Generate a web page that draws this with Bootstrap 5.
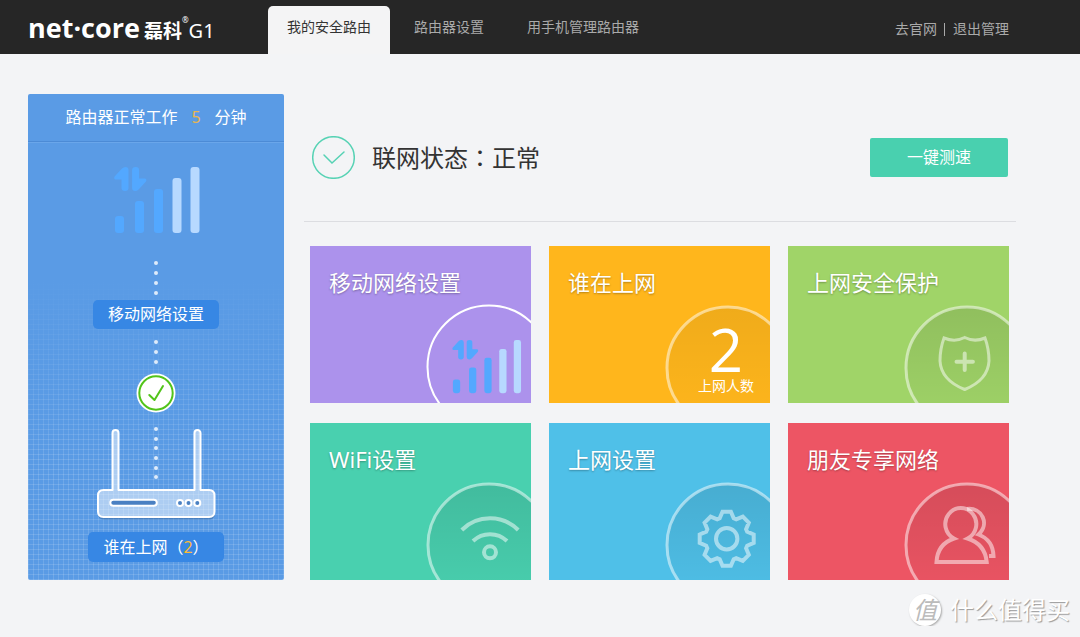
<!DOCTYPE html>
<html lang="zh-CN">
<head>
<meta charset="utf-8">
<meta name="viewport" content="width=device-width, initial-scale=1">
<title>net-core 磊科 G1</title>
<link href="https://cdn.jsdelivr.net/npm/bootstrap@5.3.0/dist/css/bootstrap.min.css" rel="stylesheet">
<style>
  body { background: #f3f4f6; font-family: "Noto Sans", "Noto Sans CJK SC", sans-serif; color: #333; }
  a { text-decoration: none; }

  /* top bar */
  .topbar { background: #262626; min-height: 54px; padding-left: 28px; padding-right: 71px; font-size: 14px; line-height: 20px; }
  .logo { width: 240px; height: 54px; color: #fff; line-height: 40px; padding-top: 8px; }
  .logo-name { font-family: "Open Sans", sans-serif; font-size: 27px; font-weight: 700; }
  .logo-cn { font-size: 19px; font-weight: 700; margin-left: 4px; }
  .logo-reg { font-size: 8px; line-height: 8px; align-self: flex-start; margin-top: 8px; }
  .logo-model { font-size: 20px; }
  .main-tabs { gap: 5px; }
  .main-tabs .nav-link { color: #aaa; padding: 11px 19px 17px; border-radius: 5px 5px 0 0; }
  .main-tabs .nav-link.active { background: #f4f4f5; color: #333; }
  .quick-links a { color: #aaa; }
  .quick-links .rule { width: 1px; height: 13px; background: #aaa; margin: 0 8px 0 7px; }

  /* page body */
  .page { padding: 40px 64px 0 28px; gap: 20px; }
  .side {
    width: 256px; border-radius: 2px; color: #fff; font-size: 16px;
    background:
      linear-gradient(#5a9be5 38%, rgba(90,155,229,0) 75%),
      repeating-linear-gradient(90deg, rgba(255,255,255,.13) 0 1px, transparent 1px 5px),
      repeating-linear-gradient(rgba(255,255,255,.13) 0 1px, transparent 1px 5px),
      #5a9be5;
  }
  .side-head { line-height: 47px; border-bottom: 1px solid #4c8bd6; box-shadow: 0 1px 0 #6aa6ea; }
  .num { color: #e9b650; }
  .side-head .num { margin: 0 14px; }
  .pill { background: #3787e4; color: #fff; border-radius: 5px; line-height: 29px; padding: 0 15px; }
  .pill .num { color: #ffbb33; }

  .status { height: 128px; border-bottom: 1px solid #dcdde1; padding: 0 8px; gap: 17px; }
  .status-text { font-size: 24px; line-height: 36px; }
  /* full-width punctuation centred in its cell */
  .punct { font-family: "Noto Sans CJK TC", sans-serif; }
  .btn-test { background: #49d0af; color: #fff; font-size: 16px; line-height: 24px; width: 138px; padding: 7px 0 8px; border-radius: 2px; border: 0; }
  .btn-test:hover { background: #3fc4a3; color: #fff; }

  .tiles { padding: 24px 7px 0 6px; }
  .tiles .row { --bs-gutter-x: 18px; --bs-gutter-y: 20px; }
  .tile { height: 157px; color: #fff; }
  .tile-title { font-size: 22px; line-height: 32px; padding: 20px 19px 0; text-shadow: 0 1px 2px rgba(0,0,0,.3); }
  .tile svg { margin-top: -5px; }
  .t-purple { background: #ac92ec; }
  .t-amber { background: #ffb61c; }
  .t-lime { background: #a0d468; }
  .t-mint { background: #49d0af; }
  .t-sky { background: #4fc0e8; }
  .t-red { background: #ed5564; }
  .ring { fill: url(#shade); stroke: rgba(255,255,255,.5); stroke-width: 3; }
  .t-amber .ring { fill-opacity: .6; }
  .glyph { fill: none; stroke: rgba(255,255,255,.5); stroke-width: 4; }
  .glyph-thin { stroke-width: 3; }
  .big-num { font-family: "Open Sans", sans-serif; font-size: 60px; fill: #fff; }
  .num-label { font-size: 14px; fill: #fff; }

  /* site signature */
  .sign { padding: 14px 10px 0 0; gap: 9px; color: #fff; text-shadow: 1px 1px 1px #999; font-size: 24px; line-height: 32px; }
  .sign-mark { width: 32px; height: 32px; border-radius: 50%; background: #fff; color: #bbb; box-shadow: 1px 1px 2px #aaa; text-shadow: none; font-size: 24px; font-style: italic; }
</style>
</head>
<body>

<svg width="0" height="0" class="position-absolute" aria-hidden="true">
  <defs>
    <linearGradient id="shade" x1="0" y1="0" x2="0" y2="1">
      <stop offset="0" stop-color="#000" stop-opacity=".1"/>
      <stop offset=".8" stop-color="#000" stop-opacity=".02"/>
    </linearGradient>
    <g id="signal">
      <g fill="#53a8ff">
        <path id="arrow" d="M18.600 16.500 L26 8.500 Q27.500 7 29.500 7 Q32.500 7 32.500 10 V28 Q32.500 31 29 31 Q25.500 31 25.500 28 V19.500 H19.500 Q17.500 19 18.600 16.500Z"/>
        <use href="#arrow" transform="rotate(180 34.300 19)"/>
        <rect x="19" y="56" width="9" height="17" rx="3"/>
        <rect x="39" y="41" width="9" height="32" rx="3"/>
        <rect x="58" y="29" width="9" height="44" rx="3"/>
      </g>
      <g fill="#b7d9ff">
        <rect x="76.500" y="18" width="9" height="55" rx="3"/>
        <rect x="94.500" y="7" width="9" height="66" rx="3"/>
      </g>
    </g>
  </defs>
</svg>

<header class="topbar d-flex flex-wrap align-items-end">
  <a href="#" class="logo d-flex align-items-baseline flex-shrink-0">
    <span class="logo-name">net·core</span><span class="logo-cn">磊科</span><span class="logo-reg">®</span><span class="logo-model">G1</span>
  </a>
  <ul class="nav main-tabs">
    <li class="nav-item"><a class="nav-link active" href="#">我的安全路由</a></li>
    <li class="nav-item"><a class="nav-link" href="#">路由器设置</a></li>
    <li class="nav-item"><a class="nav-link" href="#">用手机管理路由器</a></li>
  </ul>
  <div class="quick-links d-flex align-items-center align-self-center ms-auto pt-1">
    <a href="#">去官网</a><span class="rule"></span><a href="#">退出管理</a>
  </div>
</header>

<div class="page d-flex">
  <aside class="side d-flex flex-column align-items-center flex-shrink-0">
    <div class="side-head w-100 text-center">路由器正常工作<span class="num">5</span>分钟</div>
    <svg class="mt-3" width="120" height="142" viewBox="0 -2 120 142" aria-hidden="true">
      <use href="#signal"/>
      <g fill="#fff" fill-opacity=".8">
        <circle cx="60" cy="103" r="2"/><circle cx="60" cy="113" r="2"/><circle cx="60" cy="123" r="2"/><circle cx="60" cy="133" r="2"/>
      </g>
    </svg>
    <a href="#" class="pill">移动网络设置</a>
    <svg width="120" height="203" viewBox="0 0 120 203" aria-hidden="true">
      <g fill="#fff" fill-opacity=".8">
        <circle cx="60" cy="13" r="2"/><circle cx="60" cy="23" r="2"/><circle cx="60" cy="33" r="2"/>
        <circle cx="60" cy="100" r="2"/><circle cx="60" cy="110" r="2"/><circle cx="60" cy="119" r="2"/><circle cx="60" cy="129" r="2"/><circle cx="60" cy="139" r="2"/><circle cx="60" cy="148" r="2"/>
      </g>
      <circle cx="60" cy="64" r="19.500" fill="#fff"/>
      <circle cx="60" cy="64" r="16.700" fill="none" stroke="#52c41a" stroke-width="2"/>
      <path d="M53.300 66 L58.500 71 L67 57" fill="none" stroke="#52c41a" stroke-width="2" stroke-linecap="round" stroke-linejoin="round"/>
      <path d="M3 186 Q4 189.500 8 189.500 H113 Q117 189.500 118 186" fill="none" stroke="#33639c" stroke-opacity=".5" stroke-width="2"/>
      <path d="M16.500 161 V104 A3 3 0 0 1 22.500 104 V161 H98.500 V104 A3 3 0 0 1 104.500 104 V161 H113 Q118.500 161 118.500 166.500 V182.500 Q118.500 188 113 188 H7.500 Q2 188 2 182.500 V166.500 Q2 161 7.500 161Z" fill="#fff" fill-opacity=".5" stroke="#fff" stroke-width="2" stroke-linejoin="round"/>
      <g fill="#4a80c2" stroke="#fff" stroke-width="2">
        <rect x="14.300" y="170.700" width="46.500" height="6" rx="3"/>
        <circle cx="84" cy="174" r="3"/><circle cx="92.500" cy="174" r="3"/><circle cx="101.300" cy="174" r="3"/>
      </g>
    </svg>
    <a href="#" class="pill">谁在上网<span class="punct" lang="zh-TW">（</span><span class="num">2</span><span class="punct" lang="zh-TW">）</span></a>
  </aside>

  <main class="flex-grow-1">
    <section class="status d-flex align-items-center">
      <svg width="43" height="43" viewBox="0 0 43 43" fill="none" stroke="#56d2b4" aria-hidden="true">
        <circle cx="21.500" cy="21.500" r="20.800" stroke-width="1.500"/>
        <path d="M12 19 L20 27 L32 16" stroke-width="1.500" stroke-linecap="round"/>
      </svg>
      <div class="status-text">联网状态<span class="punct" lang="zh-TW">：</span>正常</div>
      <button type="button" class="btn btn-test ms-auto">一键测速</button>
    </section>

    <section class="tiles">
      <div class="row row-cols-1 row-cols-md-3">
        <div class="col">
          <a href="#" class="tile t-purple d-flex flex-column justify-content-between overflow-hidden">
            <span class="tile-title">移动网络设置</span>
            <svg class="align-self-end" width="106" height="100" viewBox="0 0 106 100" aria-hidden="true">
              <circle cx="64" cy="64" r="61.500" fill="none" stroke="#fff" stroke-width="2"/>
              <use href="#signal" transform="translate(12.600 31.400) scale(.806)"/>
            </svg>
          </a>
        </div>
        <div class="col">
          <a href="#" class="tile t-amber d-flex flex-column justify-content-between overflow-hidden">
            <span class="tile-title">谁在上网</span>
            <svg class="align-self-end" width="106" height="100" viewBox="0 0 106 100">
              <circle class="ring" cx="64" cy="65" r="61"/>
              <text class="big-num" x="62" y="69" text-anchor="middle">2</text>
              <text class="num-label" x="62" y="88" text-anchor="middle">上网人数</text>
            </svg>
          </a>
        </div>
        <div class="col">
          <a href="#" class="tile t-lime d-flex flex-column justify-content-between overflow-hidden">
            <span class="tile-title">上网安全保护</span>
            <svg class="align-self-end" width="106" height="100" viewBox="0 0 106 100" aria-hidden="true">
              <circle class="ring" cx="64" cy="65" r="61"/>
              <path class="glyph glyph-thin" d="M41 35 Q52 39.500 61.700 34.500 Q71.500 39.500 82 35 Q86 46 86 58 Q85 77 61.700 86.500 Q38 77 37 58 Q37 46 41 35Z"/>
              <path class="glyph" stroke-linecap="round" d="M53.500 58.700 H69.900 M61.700 50.500 V66.900"/>
            </svg>
          </a>
        </div>
        <div class="col">
          <a href="#" class="tile t-mint d-flex flex-column justify-content-between overflow-hidden">
            <span class="tile-title">WiFi设置</span>
            <svg class="align-self-end" width="106" height="100" viewBox="0 0 106 100" aria-hidden="true">
              <circle class="ring" cx="64" cy="65" r="61"/>
              <path class="glyph" d="M36.800 50 A40 40 0 0 1 93.200 50 M48 61 A24.500 24.500 0 0 1 82 61"/>
              <circle class="glyph" cx="65" cy="72.300" r="6"/>
            </svg>
          </a>
        </div>
        <div class="col">
          <a href="#" class="tile t-sky d-flex flex-column justify-content-between overflow-hidden">
            <span class="tile-title">上网设置</span>
            <svg class="align-self-end" width="106" height="100" viewBox="0 0 106 100" aria-hidden="true">
              <circle class="ring" cx="64" cy="65" r="61"/>
              <g transform="translate(62.700 58.700)">
                <path class="glyph" d="M-7 -20.500 L-4.200 -27 H4.200 L7 -20.500 L9.500 -19.400 L16.100 -22.100 L22.100 -16.100 L19.400 -9.500 L20.500 -7 L27 -4.200 V4.200 L20.500 7 L19.400 9.500 L22.100 16.100 L16.100 22.100 L9.500 19.400 L7 20.500 L4.200 27 H-4.200 L-7 20.500 L-9.500 19.400 L-16.100 22.100 L-22.100 16.100 L-19.400 9.500 L-20.500 7 L-27 4.200 V-4.200 L-20.500 -7 L-19.400 -9.500 L-22.100 -16.100 L-16.100 -22.100 L-9.500 -19.400Z"/>
                <circle class="glyph" r="10.700"/>
              </g>
            </svg>
          </a>
        </div>
        <div class="col">
          <a href="#" class="tile t-red d-flex flex-column justify-content-between overflow-hidden">
            <span class="tile-title">朋友专享网络</span>
            <svg class="align-self-end" width="106" height="100" viewBox="0 0 106 100" aria-hidden="true">
              <circle class="ring" cx="64" cy="65" r="61"/>
              <path class="glyph" d="M33.500 82 Q34.500 64 51 58.500 A15.500 16 0 1 1 64.600 58.500 Q82 64 83.700 82Z"/>
              <path class="glyph" d="M64 29 C79 27 87 44 75.500 54.500 Q90 60 90.500 76 H86"/>
            </svg>
          </a>
        </div>
      </div>
    </section>
  </main>
</div>

<footer class="sign d-flex justify-content-end align-items-center">
  <span class="sign-mark d-flex align-items-center justify-content-center">值</span>
  <span>什么值得买</span>
</footer>

<script src="https://cdn.jsdelivr.net/npm/bootstrap@5.3.0/dist/js/bootstrap.bundle.min.js"></script>
</body>
</html>
